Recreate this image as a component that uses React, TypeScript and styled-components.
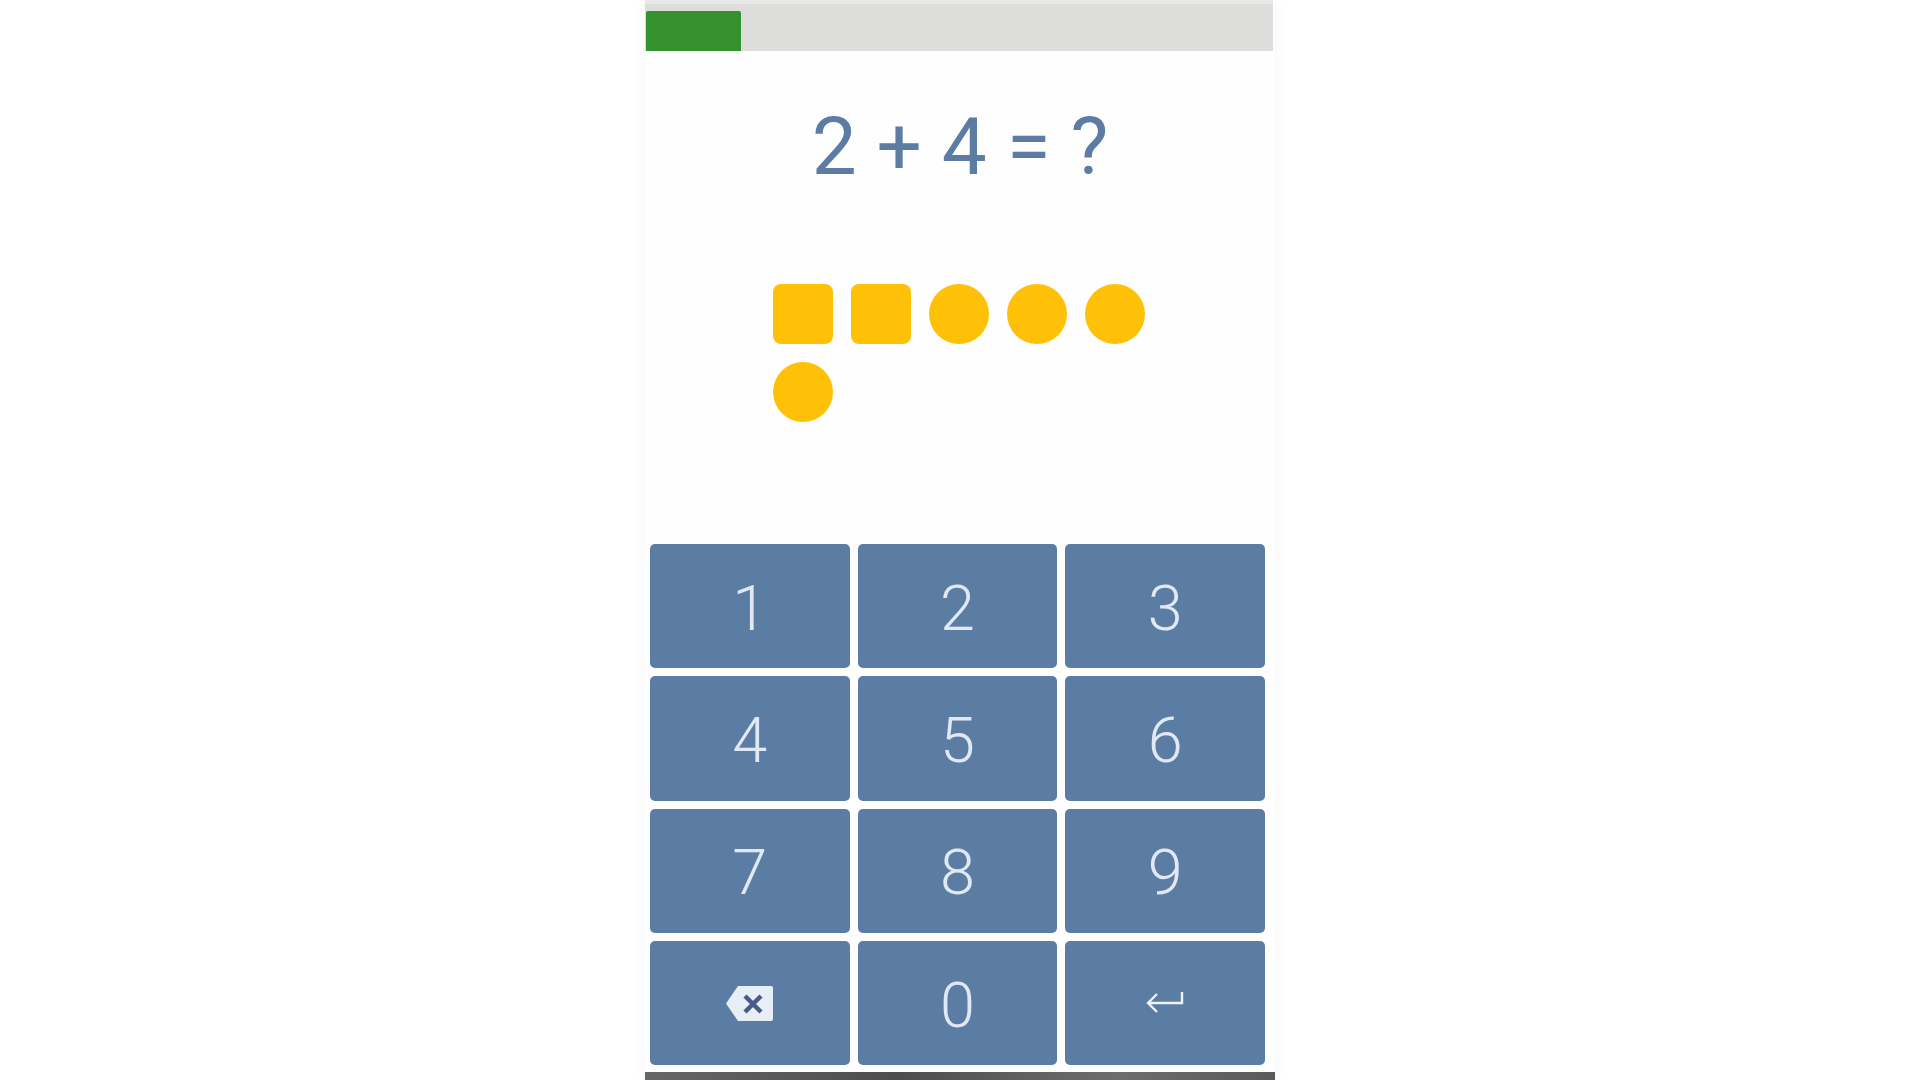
import styled, { createGlobalStyle } from "styled-components";

const GlobalStyle = createGlobalStyle`
  html, body {
    margin: 0;
    padding: 0;
    background-color: #ffffff;
    font-family: Roboto, "Liberation Sans", sans-serif;
  }
`;

const Page = styled.div`
  height: 1080px;
  display: flex;
  justify-content: center;
  overflow: hidden;
`;

const Phone = styled.main`
  width: 630px;
  height: 1080px;
  display: flex;
  flex-direction: column;
  background-color: #fefefe;
  box-shadow: 0 0 9px rgba(90, 100, 90, 0.07);
`;

const Track = styled.div`
  height: 40px;
  width: 628px;
  padding-top: 11px;
  background: linear-gradient(#e7e9e7 0, #e7e9e7 4px, #dddedc 4px, #dddedc 100%);
`;

const Progress = styled.div<{ $width: number }>`
  width: ${(p) => p.$width}px;
  height: 40px;
  margin-left: 1px;
  background-color: #35922f;
  border-radius: 2px 2px 0 0;
`;

const Question = styled.h1`
  margin: 48px 0 0;
  height: 94px;
  line-height: 96px;
  text-align: center;
  font-size: 80px;
  font-weight: 400;
  color: #5c7ca3;
`;

const Shapes = styled.div`
  margin-top: 91px;
  padding-left: 128px;
  display: grid;
  grid-template-columns: repeat(5, 60px);
  gap: 18px;
`;

const Shape = styled.div<{ $round?: boolean }>`
  width: 60px;
  height: 60px;
  background-color: #ffc107;
  border-radius: ${(p) => (p.$round ? "50%" : "8px")};
`;

const Keypad = styled.div`
  margin: 122px 10px 0 5px;
  display: grid;
  grid-template-columns: repeat(3, 1fr);
  grid-auto-rows: 124.33px;
  gap: 8px;
`;

const Key = styled.button`
  border: none;
  padding: 4px 0 0;
  display: flex;
  align-items: center;
  justify-content: center;
  border-radius: 5px;
  background-color: #5b7ca3;
  color: #dfe8f3;
  font-family: Roboto, "Liberation Sans", sans-serif;
  font-size: 63px;
  font-weight: 300;
  cursor: pointer;
`;

const IconKey = styled(Key)`
  padding: 0;
`;

const BottomBar = styled.div`
  margin-top: 7px;
  height: 8px;
  background: linear-gradient(90deg, #666 0%, #4d4d4d 40%, #6d6d6d 75%, #5a5a5a 100%);
`;

const BackspaceIcon = () => (
  <svg width="49" height="37" viewBox="0 0 49 37">
    <path
      d="M13 1 L46 1 Q48 1 48 3 L48 34 Q48 36 46 36 L13 36 L1 18.5 Z"
      fill="#e8eef6"
    />
    <path
      d="M20 11 L36 27 M36 11 L20 27"
      stroke="#465a8c"
      strokeWidth="4.5"
      fill="none"
    />
  </svg>
);

const EnterIcon = () => (
  <svg width="38" height="24" viewBox="0 0 38 24">
    <path
      d="M36 1 L36 12 L2 12 M11 3 L2 12 L11 21"
      stroke="#f0f4f9"
      strokeWidth="2.4"
      fill="none"
    />
  </svg>
);

const shapes = [false, false, true, true, true, true];
const digits = ["1", "2", "3", "4", "5", "6", "7", "8", "9"];

export default function App() {
  return (
    <Page>
      <GlobalStyle />
      <Phone>
        <Track>
          <Progress $width={95} />
        </Track>
        <Question>2 + 4 = ?</Question>
        <Shapes>
          {shapes.map((round, i) => (
            <Shape key={i} $round={round} />
          ))}
        </Shapes>
        <Keypad>
          {digits.map((d) => (
            <Key key={d}>{d}</Key>
          ))}
          <IconKey aria-label="Delete">
            <BackspaceIcon />
          </IconKey>
          <Key>0</Key>
          <IconKey aria-label="Enter">
            <EnterIcon />
          </IconKey>
        </Keypad>
        <BottomBar />
      </Phone>
    </Page>
  );
}
